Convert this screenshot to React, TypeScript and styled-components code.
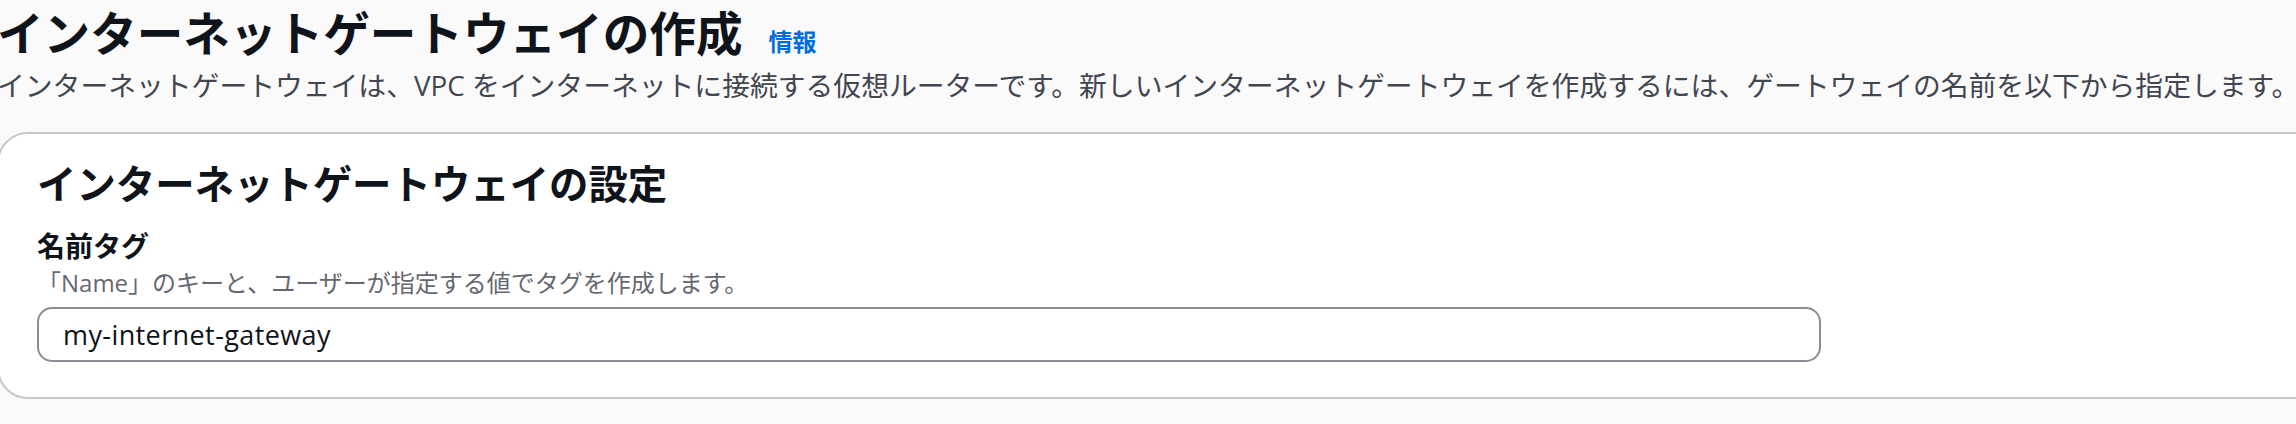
import React from "react";
import styled, { createGlobalStyle } from "styled-components";

const GlobalStyle = createGlobalStyle`
  html, body {
    margin: 0;
    padding: 0;
    background: #fafafa;
    overflow: hidden;
  }
  body {
    font-family: "Open Sans", "Noto Sans CJK JP", sans-serif;
    color: #0f141a;
  }
`;

const Page = styled.main`
  display: flex;
  flex-direction: column;
  margin-left: -3px;
  width: calc(100% + 80px);
  padding-top: 4px;
`;

const PageHeader = styled.header`
  display: flex;
  flex-direction: column;
`;

const TitleRow = styled.div`
  display: flex;
  align-items: baseline;
  gap: 26px;
`;

const Title = styled.h1`
  margin: 0;
  font-size: 46.6px;
  line-height: 58px;
  font-weight: 700;
  color: #0f141a;
  white-space: nowrap;
`;

const InfoLink = styled.a`
  font-size: 24px;
  font-weight: 700;
  color: #006ce0;
  text-decoration: none;
  cursor: pointer;
`;

const Description = styled.p`
  margin: 0;
  padding-top: 4px;
  font-size: 27.8px;
  line-height: 38px;
  color: #424650;
  white-space: nowrap;
`;

const Card = styled.section`
  margin-top: 28px;
  background: #ffffff;
  border: 2px solid #c6c6cd;
  border-radius: 31px;
  padding: 27px 40px 35px 38px;
  display: flex;
  flex-direction: column;
`;

const CardTitle = styled.h2`
  margin: 0;
  font-size: 39.4px;
  line-height: 46px;
  font-weight: 700;
  color: #0f141a;
  white-space: nowrap;
`;

const Field = styled.div`
  display: flex;
  flex-direction: column;
  margin-top: 18px;
  width: 1784px;
`;

const Label = styled.label`
  font-size: 28px;
  line-height: 42px;
  font-weight: 700;
  color: #0f141a;
`;

const Constraint = styled.span`
  font-size: 24px;
  line-height: 31px;
  color: #656871;
`;

const TextInput = styled.input`
  margin-top: 9px;
  box-sizing: border-box;
  height: 55px;
  width: 100%;
  padding: 0 24px;
  border: 2px solid #8c8c94;
  border-radius: 15px;
  background: #ffffff;
  font-family: "Open Sans", "Noto Sans CJK JP", sans-serif;
  font-size: 27px;
  letter-spacing: 0.4px;
  color: #0f141a;
  outline: none;
`;

export default function App() {
  return (
    <>
      <GlobalStyle />
      <Page>
        <PageHeader>
          <TitleRow>
            <Title>インターネットゲートウェイの作成</Title>
            <InfoLink>情報</InfoLink>
          </TitleRow>
          <Description>
            インターネットゲートウェイは、VPC をインターネットに接続する仮想ルーターです。新しいインターネットゲートウェイを作成するには、ゲートウェイの名前を以下から指定します。
          </Description>
        </PageHeader>
        <Card>
          <CardTitle>インターネットゲートウェイの設定</CardTitle>
          <Field>
            <Label htmlFor="name-tag">名前タグ</Label>
            <Constraint>「Name」のキーと、ユーザーが指定する値でタグを作成します。</Constraint>
            <TextInput id="name-tag" defaultValue="my-internet-gateway" readOnly />
          </Field>
        </Card>
      </Page>
    </>
  );
}
